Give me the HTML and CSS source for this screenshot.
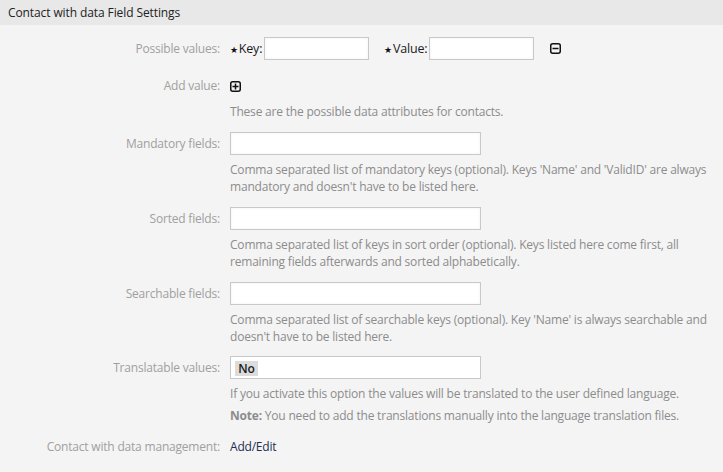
FILE: index.html
```html
<!DOCTYPE html>
<html lang="en">
<head>
<meta charset="utf-8">
<title>Contact with data Field Settings</title>
<link rel="stylesheet" href="styles.css">
</head>
<body>
<div class="widget">
  <div class="header"><h2>Contact with data Field Settings</h2></div>
  <div class="content">
    <div class="row row-values">
      <label class="label">Possible values:</label>
      <div class="field inline">
        <span class="req">★</span><span class="sublabel">Key:</span>
        <input class="small" type="text">
        <span class="req req-value">★</span><span class="sublabel">Value:</span>
        <input class="small" type="text">
        <span class="icon icon-minus">
          <svg width="11" height="11" viewBox="0 0 11 11"><rect x="0.75" y="0.75" width="9.5" height="9.5" rx="2" fill="none" stroke="#111" stroke-width="1.5"/><path d="M2.5 5.5h6" stroke="#111" stroke-width="1.5"/></svg>
        </span>
      </div>
    </div>
    <div class="row row-add">
      <label class="label">Add value:</label>
      <div class="field">
        <span class="icon icon-plus">
          <svg width="11" height="11" viewBox="0 0 11 11"><rect x="0.75" y="0.75" width="9.5" height="9.5" rx="2" fill="none" stroke="#111" stroke-width="1.5"/><path d="M2.5 5.5h6M5.5 2.5v6" stroke="#111" stroke-width="1.5"/></svg>
        </span>
        <p class="desc">These are the possible data attributes for contacts.</p>
      </div>
    </div>
    <div class="row">
      <label class="label">Mandatory fields:</label>
      <div class="field">
        <input class="wide" type="text">
        <p class="desc">Comma separated list of mandatory keys (optional). Keys 'Name' and 'ValidID' are always mandatory and doesn't have to be listed here.</p>
      </div>
    </div>
    <div class="row">
      <label class="label">Sorted fields:</label>
      <div class="field">
        <input class="wide" type="text">
        <p class="desc">Comma separated list of keys in sort order (optional). Keys listed here come first, all remaining fields afterwards and sorted alphabetically.</p>
      </div>
    </div>
    <div class="row">
      <label class="label">Searchable fields:</label>
      <div class="field">
        <input class="wide" type="text">
        <p class="desc">Comma separated list of searchable keys (optional). Key 'Name' is always searchable and doesn't have to be listed here.</p>
      </div>
    </div>
    <div class="row row-translate">
      <label class="label">Translatable values:</label>
      <div class="field">
        <div class="select"><span class="tag">No</span></div>
        <p class="desc">If you activate this option the values will be translated to the user defined language.</p>
        <p class="desc note"><strong>Note:</strong> You need to add the translations manually into the language translation files.</p>
      </div>
    </div>
    <div class="row row-link">
      <label class="label">Contact with data management:</label>
      <div class="field"><a class="link" href="#">Add/Edit</a></div>
    </div>
  </div>
</div>
</body>
</html>
```
FILE: styles.css
```css
html, body {
  margin: 0;
  padding: 0;
  background: #f4f4f4;
}
body {
  font-family: "Open Sans", sans-serif;
  font-size: 12px;
  letter-spacing: -0.2px;
  color: #888;
}
.widget {
  width: 723px;
}
.header {
  height: 25px;
  background: #e8e8e8;
  display: flex;
  align-items: center;
  padding-left: 8px;
}
.header h2 {
  margin: 0;
  font-size: 12px;
  font-weight: normal;
  letter-spacing: -0.1px;
  color: #222;
  line-height: 25px;
}
.content {
  padding: 12px 8px 12px 0;
  display: flex;
  flex-direction: column;
  gap: 12px;
}
.row {
  display: grid;
  grid-template-columns: 220px 485px;
  column-gap: 10px;
  align-items: start;
}
.label {
  text-align: right;
  color: #a0a0a0;
  line-height: 23px;
}
.field {
  line-height: 17px;
}
.inline {
  display: flex;
  align-items: center;
  height: 23px;
}
.req {
  font-size: 9px;
  color: #111;
  margin-right: 1px;
  line-height: 1;
  position: relative;
  top: 1px;
}
.req-value {
  margin-left: 15px;
}
.sublabel {
  color: #1a1a1a;
  font-size: 12.5px;
  margin-right: 2px;
}
input {
  box-sizing: border-box;
  height: 23px;
  border: 1px solid #c8c8c8;
  background: #fff;
  box-shadow: inset 0 0 3px rgba(0,0,0,0.06);
  margin: 0;
  padding: 0 4px;
  font: inherit;
}
input.small {
  width: 105px;
}
input.wide {
  width: 251px;
  display: block;
}
.icon {
  display: inline-flex;
  width: 11px;
  height: 11px;
}
.icon-minus {
  margin-left: 16px;
}
.row-add {
  margin-top: 5px;
}
.row-add .label {
  line-height: 17px;
}
.row-add .icon-plus {
  margin-top: 4px;
  display: flex;
}
.row-add .desc {
  margin-top: 11px;
}
.desc {
  margin: 6px 0 0;
  color: #8c8c8c;
  line-height: 17px;
}
.note {
  margin-top: 5px;
}
.note strong {
  font-weight: 700;
  color: #8c8c8c;
}
.row-translate {
  margin-top: -1px;
}
.select {
  box-sizing: border-box;
  width: 251px;
  height: 23px;
  border: 1px solid #c8c8c8;
  background: #fff;
  padding: 3px 0 0 4px;
}
.tag {
  display: inline-block;
  background: #dcdcdc;
  color: #1a1a1a;
  width: 23px;
  height: 15px;
  line-height: 15px;
  text-align: center;
  font-weight: 600;
}
.row-link {
  margin-top: 2px;
}
.row-link .label {
  line-height: 17px;
}
.link {
  color: #1c2f52;
  text-decoration: none;
}
```
